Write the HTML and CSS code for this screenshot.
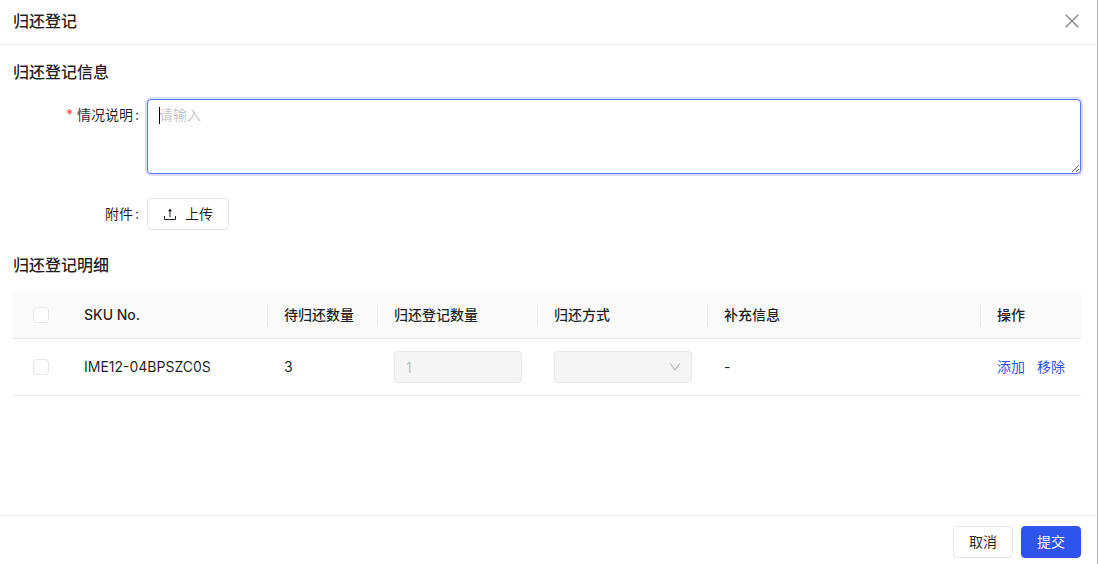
FILE: index.html
```
<!DOCTYPE html>
<html lang="zh-CN">
<head>
  <meta charset="UTF-8">
  <title>归还登记</title>
  <meta name="viewport" content="width=device-width, initial-scale=1.0">
  <link rel="stylesheet" href="styles.css">
</head>
<body>

  <div class="drawer">
    <!-- Header -->
    <header class="drawer-header">
      <h1 class="drawer-title">归还登记</h1>
      <button type="button" class="close-btn" aria-label="关闭">
        <svg width="16" height="16" viewBox="0 0 16 16" fill="none" stroke="currentColor" stroke-width="1.5">
          <path d="M1.7 1.7l12.6 12.6M14.3 1.7L1.7 14.3"/>
        </svg>
      </button>
    </header>

    <main class="drawer-body">
      <h2 class="section-title">归还登记信息</h2>

      <div class="form-item">
        <label class="form-label required" for="remark">情况说明</label>
        <div class="form-control">
          <textarea id="remark" class="textarea focused" placeholder="请输入" required></textarea>
          <span class="caret"></span>
        </div>
      </div>

      <div class="form-item">
        <label class="form-label" for="upload">附件</label>
        <div class="form-control">
          <button type="button" id="upload" class="btn">
            <svg width="14" height="14" viewBox="0 0 14 14" fill="none" stroke="currentColor">
              <path d="M1.5 9v3.5h11V9M7 10V3"/>
              <path d="M7 1.6L9 4.2H5z" fill="currentColor" stroke="none"/>
            </svg>
            <span>上传</span>
          </button>
        </div>
      </div>

      <h2 class="section-title">归还登记明细</h2>

      <table class="table">
        <colgroup>
          <col class="col-check">
          <col class="col-sku">
          <col class="col-pending">
          <col class="col-count">
          <col class="col-method">
          <col>
          <col class="col-action">
        </colgroup>
        <thead>
          <tr>
            <th class="check-cell no-split"><input type="checkbox" class="checkbox" aria-label="全选"></th>
            <th>SKU No.</th>
            <th>待归还数量</th>
            <th>归还登记数量</th>
            <th>归还方式</th>
            <th>补充信息</th>
            <th class="no-split">操作</th>
          </tr>
        </thead>
        <tbody>
          <tr>
            <td class="check-cell"><input type="checkbox" class="checkbox" aria-label="选择"></td>
            <td>IME12-04BPSZC0S</td>
            <td>3</td>
            <td><input type="text" class="input" value="1" aria-label="归还登记数量" disabled></td>
            <td>
              <div class="select-wrap">
                <select class="input select" aria-label="归还方式" disabled><option></option></select>
                <svg class="select-arrow" width="12" height="12" viewBox="0 0 12 12" fill="none" stroke="currentColor" stroke-width="1.1">
                  <path d="M1.2 2.5L6 9l4.8-6.5"/>
                </svg>
              </div>
            </td>
            <td>-</td>
            <td>
              <div class="actions">
                <a href="#">添加</a>
                <a href="#">移除</a>
              </div>
            </td>
          </tr>
        </tbody>
      </table>
    </main>

    <!-- Footer -->
    <footer class="drawer-footer">
      <button type="button" class="btn">取消</button>
      <button type="button" class="btn btn-primary">提交</button>
    </footer>
  </div>

</body>
</html>
```
FILE: styles.css
```
* {
  box-sizing: border-box;
}

body {
  margin: 0;
  font-family: Inter, "Noto Sans CJK SC", sans-serif;
  font-size: 14px;
  line-height: 22px;
  color: rgba(0, 0, 0, 0.88);
  background: #fff;
}

button,
input,
select,
textarea {
  font: inherit;
}

.drawer {
  display: flex;
  flex-direction: column;
  min-height: 100vh;
  border-right: 1px solid #b3b7bd;
}

/* Header */
.drawer-header {
  display: flex;
  align-items: center;
  justify-content: space-between;
  padding: 9px 16px 11px 13px;
  border-bottom: 1px solid #f0f0f0;
}

.drawer-title,
.section-title {
  margin: 0;
  font-size: 16px;
  line-height: 24px;
  font-weight: 500;
}

.close-btn {
  display: flex;
  padding: 1px;
  border: none;
  background: none;
  color: rgba(0, 0, 0, 0.45);
  cursor: pointer;
}

/* Form */
.drawer-body {
  flex: 1;
  padding: 15px 16px 15px 13px;
}

.form-item {
  display: flex;
  align-items: flex-start;
  margin-bottom: 24px;
}

.form-item + .section-title {
  margin-top: 23px;
}

.section-title + .form-item {
  margin-top: 15px;
}

.form-item:has(+ .section-title) {
  margin-bottom: 0;
}

.form-label {
  flex: none;
  width: 134px;
  padding-right: 8px;
  line-height: 32px;
  text-align: right;
}

.form-label::after {
  content: ":";
  margin-left: 2px;
}

.form-label.required::before {
  content: "*";
  margin-right: 4px;
  color: #ff4d4f;
}

.form-control {
  position: relative;
  flex: 1;
}

.textarea {
  display: block;
  width: 100%;
  height: 75px;
  padding: 4px 11px;
  border: 1px solid #d9d9d9;
  border-radius: 4px;
  outline: none;
  color: inherit;
  resize: vertical;
}

.textarea.focused {
  border-color: #5478f0;
  box-shadow: 0 0 0 2px #dcdcfb;
}

.textarea::placeholder {
  color: rgba(0, 0, 0, 0.25);
}

.caret {
  position: absolute;
  top: 8px;
  left: 12px;
  width: 1px;
  height: 17px;
  background: #000;
}

.btn {
  display: inline-flex;
  align-items: center;
  gap: 8px;
  height: 32px;
  padding: 0 15px;
  border: 1px solid #e5e6e8;
  border-radius: 4px;
  background: #fff;
  color: inherit;
  vertical-align: top;
  cursor: pointer;
}

.btn-primary {
  border-color: #2f54eb;
  background: #2f54eb;
  color: #fff;
}

/* Table */
.table {
  width: 100%;
  margin-top: 15px;
  border-collapse: separate;
  border-spacing: 0;
  table-layout: fixed;
}

.col-check {
  width: 55px;
}

.col-sku {
  width: 200px;
}

.col-pending {
  width: 110px;
}

.col-count {
  width: 160px;
}

.col-method {
  width: 170px;
}

.col-action {
  width: 100px;
}

.table th,
.table td {
  padding: 12px 16px;
  border-bottom: 1px solid #e8e8e8;
  text-align: left;
}

.table th {
  position: relative;
  background: #fafafa;
  font-weight: 500;
}

/* short divider between header cells */
.table th:not(.no-split)::after {
  content: "";
  position: absolute;
  top: 12px;
  right: 0;
  width: 1px;
  height: 22px;
  background: #ececec;
}

.table .check-cell {
  padding: 0 20px;
}

.checkbox {
  appearance: none;
  display: block;
  width: 16px;
  height: 16px;
  margin: 0;
  border: 1px solid #e5e6e8;
  border-radius: 4px;
  background: #fff;
}

.input {
  display: block;
  width: 100%;
  height: 32px;
  padding: 4px 11px;
  border: 1px solid #e5e6e8;
  border-radius: 4px;
  background: #f5f5f5;
  color: rgba(0, 0, 0, 0.25);
}

.select-wrap {
  position: relative;
}

.select {
  appearance: none;
  opacity: 1;
}

.select-arrow {
  position: absolute;
  top: 10px;
  right: 11px;
  color: rgba(0, 0, 0, 0.25);
  pointer-events: none;
}

.actions {
  display: flex;
  gap: 12px;
}

.actions a {
  color: #2f54eb;
  text-decoration: none;
  white-space: nowrap;
}

/* Footer */
.drawer-footer {
  display: flex;
  justify-content: flex-end;
  gap: 8px;
  padding: 10px 16px 6px;
  border-top: 1px solid #f0f0f0;
}
```
